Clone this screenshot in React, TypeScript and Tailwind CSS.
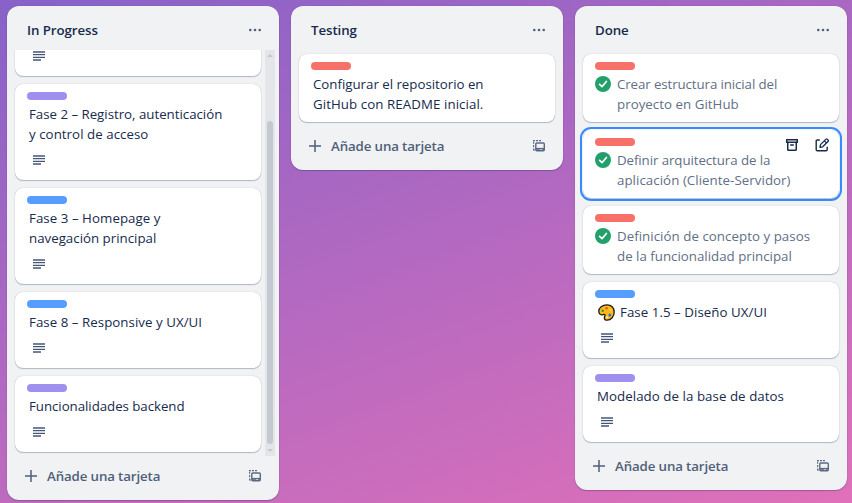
import type { ReactNode } from "react";

type Tone = "purple" | "blue" | "red";

const TONES: Record<Tone, string> = {
  purple: "bg-[#9f8fef]",
  blue: "bg-[#579dff]",
  red: "bg-[#f87168]",
};

function DescriptionIcon() {
  return (
    <svg width="12" height="10" viewBox="0 0 12 10" shapeRendering="crispEdges" className="ml-1 block">
      <rect x="0" y="0" width="12" height="2" fill="#72809b" />
      <rect x="0" y="3" width="12" height="1" fill="#44546f" />
      <rect x="0" y="4" width="12" height="2" fill="#d5d9e0" />
      <rect x="0" y="6" width="12" height="1" fill="#44546f" />
      <rect x="0" y="8" width="8" height="2" fill="#72809b" />
    </svg>
  );
}

function CheckIcon() {
  return (
    <svg width="16" height="16" viewBox="0 0 16 16" className="mt-0.5 shrink-0">
      <circle cx="8" cy="8" r="8" fill="#22a06b" />
      <path d="M4.600 8.400 7 10.700l4.400-5.200" fill="none" stroke="#fff" strokeWidth="1.700" strokeLinecap="round" strokeLinejoin="round" />
    </svg>
  );
}

function TemplateIcon() {
  return (
    <svg width="12" height="12" viewBox="0 0 12 12" fill="none" stroke="#5a6982" strokeWidth="1.100">
      <path d="M2 10H.6V8.500M.6 7.300V5M.6 3.800V2M.6 1.400V.600H2M3 .600H5M6 .600H8M9 .600" />
      <rect x="2.800" y="3" width="8.500" height="7.800" rx="1" strokeWidth="1.400" />
      <path d="M2.800 8.600h8.500" strokeWidth="1.400" />
      <path d="M3 10h4M9 10h2" strokeWidth="1.600" />
    </svg>
  );
}

function PaletteIcon() {
  return (
    <svg width="17" height="17" viewBox="0 0 17 17" className="ml-[3px] mr-[5px] mt-[2px] shrink-0">
      <path
        d="M9 .8C4.300.8.8 3.700.8 7.300c0 2.200 1.300 3.600 3 3.500 1.400-.1 2.100-.8 3-.2.9.7-.2 1.500-.4 2.800-.3 1.700.8 2.800 2.700 2.800 4 0 7.100-3.700 7.100-8.200C16.200 3.600 13.300.8 9 .8Z"
        fill="#ffb81c"
        stroke="#1b1b1b"
        strokeWidth="1.300"
      />
      <circle cx="4.700" cy="6.700" r="1.200" fill="#16a04a" />
      <circle cx="8.600" cy="4.300" r="1.200" fill="#e8542b" />
      <circle cx="12.400" cy="6" r="1.100" fill="#f4df3b" />
      <circle cx="11.800" cy="10.900" r="1.500" fill="#2f6fe0" />
      <circle cx="9" cy="13.300" r="1.100" fill="#ffe9b0" />
    </svg>
  );
}

function ArchiveIcon() {
  return (
    <svg width="12" height="12" viewBox="0 0 12 12" fill="none" stroke="#172b4d" strokeWidth="1.500">
      <path d="M.75.75h10.500v2.500H.75z" />
      <path d="M1.750 3.300v7.200c0 .5.2.75.7.75h7.100c.5 0 .7-.25.7-.75V3.300M4.200 6h3.600" />
    </svg>
  );
}

function EditIcon() {
  return (
    <svg width="14" height="14" viewBox="0 0 14 14" fill="none" stroke="#172b4d" strokeWidth="1.400" strokeLinejoin="round">
      <path d="M4.800 2H2.300C1.600 2 1.200 2.400 1.200 3.100v8.600c0 .7.4 1.100 1.100 1.100h8.800c.7 0 1.100-.4 1.100-1.100V8.700" />
      <path d="M5 9.300 5.500 6.600 11 1.100c.4-.4.7-.4 1.100 0l1.100 1.100c.4.400.4.700 0 1.100L7.700 8.800 5 9.300ZM9.400 2.900l2 2" strokeWidth="1.300" />
    </svg>
  );
}

type Line = { text: string; spacing?: string };

type CardProps = {
  tone: Tone;
  lines: Line[];
  done?: boolean;
  selected?: boolean;
  description?: boolean;
  emoji?: boolean;
};

function Card({ tone, lines, done, selected, description, emoji }: CardProps) {
  return (
    <article
      className={`relative shrink-0 rounded-lg bg-white px-3 py-2 ${
        selected
          ? "shadow-[0_1px_1px_#091e4240,0_0_1px_#091e424f,0_0_0_1px_#fff,0_0_0_3px_#388bff]"
          : "shadow-[0_1px_1px_#091e4240,0_0_1px_#091e424f]"
      }`}
    >
      <div className={`mb-1 h-2 w-10 rounded-full ${TONES[tone]}`} />
      <div className={`flex ${done ? "gap-1" : ""}`}>
        {done && <CheckIcon />}
        {emoji && <PaletteIcon />}
        <div className={`whitespace-nowrap text-[13.3px] leading-5 ${emoji ? "" : "pl-0.5"} ${done ? "text-[#626f86]" : "text-[#172b4d]"}`}>
          {lines.map((l) => (
            <p key={l.text} className={l.spacing ?? ""}>
              {l.text}
            </p>
          ))}
        </div>
      </div>
      {description && (
        <div className="flex h-7 items-center pl-0.5 pt-1">
          <DescriptionIcon />
        </div>
      )}
      {selected && (
        <div className="absolute right-2.5 top-2 flex items-center gap-[17px]">
          <ArchiveIcon />
          <EditIcon />
        </div>
      )}
    </article>
  );
}

function Column({ title, children }: { title: string; children: ReactNode }) {
  return (
    <section className="flex w-[272px] shrink-0 flex-col rounded-xl bg-[#f1f2f4] shadow-[0_1px_1px_#091e4240,0_0_1px_#091e424f]">
      <header className="flex h-11 items-center justify-between pl-5 pr-[18px] pt-1">
        <h2 className="text-[13.3px] font-semibold leading-5 tracking-[-0.08px] text-[#172b4d]">{title}</h2>
        <svg width="12" height="4" viewBox="0 0 12 4" fill="#505f79">
          <circle cx="1.300" cy="2" r="1.300" />
          <circle cx="6" cy="2" r="1.300" />
          <circle cx="10.700" cy="2" r="1.300" />
        </svg>
      </header>
      {children}
      <footer className="flex h-11 items-center px-[18px] pb-1">
        <svg width="12" height="12" viewBox="0 0 12 12" stroke="#505f79" strokeWidth="1.500">
          <path d="M6 0v12M0 6h12" />
        </svg>
        <span className="ml-[10px] grow whitespace-nowrap text-[13.3px] font-semibold leading-5 tracking-[-0.13px] text-[#505f79]">
          Añade una tarjeta
        </span>
        <TemplateIcon />
      </footer>
    </section>
  );
}

export default function App() {
  return (
    <main className="flex h-[503px] w-[852px] items-start gap-3 overflow-hidden bg-[linear-gradient(160deg,#8762c8_0%,#e070b9_100%)] pl-[7px] pt-1.5 font-['Open_Sans','Noto_Sans',sans-serif]">
      <Column title="In Progress">
        <div className="flex h-[406px] justify-between pr-1">
          <div className="flex h-full w-[258px] flex-col justify-end gap-2 overflow-hidden pb-1 pl-2 pr-1">
            <Card tone="purple" description lines={[]} />
            <Card
              tone="purple"
              description
              lines={[{ text: "Fase 2 – Registro, autenticación", spacing: "tracking-[-0.02px]" }, { text: "y control de acceso", spacing: "tracking-[0.04px]" }]}
            />
            <Card
              tone="blue"
              description
              lines={[{ text: "Fase 3 – Homepage y", spacing: "tracking-[0.05px]" }, { text: "navegación principal" }]}
            />
            <Card tone="blue" description lines={[{ text: "Fase 8 – Responsive y UX/UI", spacing: "tracking-[0.04px]" }]} />
            <Card tone="purple" description lines={[{ text: "Funcionalidades backend", spacing: "tracking-[-0.05px]" }]} />
          </div>
          <div className="flex w-[10px] shrink-0 flex-col items-center bg-[#e3e5e9]">
            <svg width="6" height="3" viewBox="0 0 6 3" className="mt-1 shrink-0">
              <path d="M3 0 6 3H0Z" fill="#c1c6d0" />
            </svg>
            <div className="mt-16 h-[323px] w-1.5 shrink-0 rounded-full bg-[#c4c8d1]" />
            <svg width="6" height="3" viewBox="0 0 6 3" className="mt-[5px] shrink-0">
              <path d="M0 0h6L3 3Z" fill="#c1c6d0" />
            </svg>
          </div>
        </div>
      </Column>
      <Column title="Testing">
        <div className="px-2 py-1">
          <Card
            tone="red"
            lines={[{ text: "Configurar el repositorio en", spacing: "tracking-[-0.02px]" }, { text: "GitHub con README inicial.", spacing: "tracking-[0.07px]" }]}
          />
        </div>
      </Column>
      <Column title="Done">
        <div className="flex flex-col gap-2 px-2 py-1">
          <Card
            tone="red"
            done
            lines={[{ text: "Crear estructura inicial del", spacing: "tracking-[-0.1px]" }, { text: "proyecto en GitHub", spacing: "tracking-[0.03px]" }]}
          />
          <Card
            tone="red"
            done
            selected
            lines={[{ text: "Definir arquitectura de la", spacing: "tracking-[-0.08px]" }, { text: "aplicación (Cliente-Servidor)", spacing: "tracking-[0.05px]" }]}
          />
          <Card
            tone="red"
            done
            lines={[{ text: "Definición de concepto y pasos", spacing: "tracking-[0.04px]" }, { text: "de la funcionalidad principal" }]}
          />
          <Card tone="blue" emoji description lines={[{ text: "Fase 1.5 – Diseño UX/UI", spacing: "tracking-[0.05px]" }]} />
          <Card tone="purple" description lines={[{ text: "Modelado de la base de datos", spacing: "tracking-[0.05px]" }]} />
        </div>
      </Column>
    </main>
  );
}
